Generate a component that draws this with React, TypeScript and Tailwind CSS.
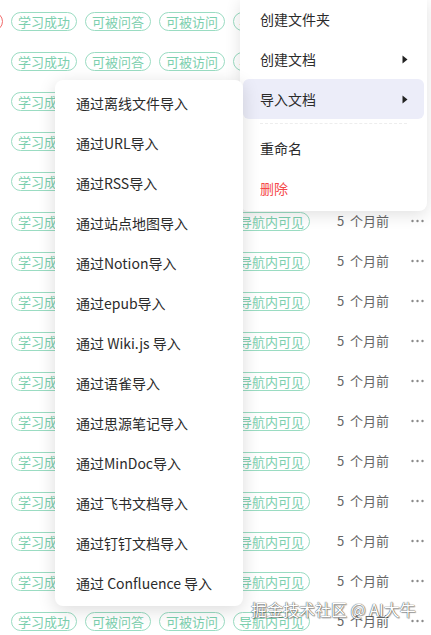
import React from "react";

const font = { fontFamily: '"Noto Sans CJK SC", "Noto Sans", sans-serif' };

function Tag({ children, w }: { children: React.ReactNode; w: string }) {
  return (
    <span
      className={`flex h-[19px] ${w} shrink-0 items-center justify-center whitespace-nowrap rounded-full border border-[#9adcc2] text-[13px] leading-none text-[#7ccfae]`}
    >
      {children}
    </span>
  );
}

function Dots() {
  return (
    <svg width="13" height="4" viewBox="0 0 13 4" className="shrink-0">
      <circle cx="1.5" cy="2" r="1.2" fill="#8a8a8a" />
      <circle cx="6.5" cy="2" r="1.2" fill="#8a8a8a" />
      <circle cx="11.5" cy="2" r="1.2" fill="#8a8a8a" />
    </svg>
  );
}

function Row({ first }: { first?: boolean }) {
  return (
    <div className="flex h-10 w-[431px] shrink-0 items-center whitespace-nowrap pl-[11px]">
      {first && (
        <span className="-ml-[63px] mr-[8px] h-[19px] w-[55px] shrink-0 rounded-full border border-[#f16b6b]" />
      )}
      <div className="flex shrink-0 gap-[8px]">
        <Tag w="w-[66px]">学习成功</Tag>
        <Tag w="w-[66px]">可被问答</Tag>
        <Tag w="w-[66px]">可被访问</Tag>
        <Tag w="w-[77px]">导航内可见</Tag>
      </div>
      <span className="ml-[27px] shrink-0 text-[13px] text-[#666]">5&nbsp;&nbsp;个月前</span>
      <span className="ml-[22px] flex shrink-0 items-center">
        <Dots />
      </span>
    </div>
  );
}

function Arrow() {
  return (
    <svg width="6" height="9" viewBox="0 0 6 9" className="shrink-0">
      <path d="M0.5 0.5 L5.5 4.5 L0.5 8.5 Z" fill="#222" />
    </svg>
  );
}

const subItems = [
  "通过离线文件导入",
  "通过URL导入",
  "通过RSS导入",
  "通过站点地图导入",
  "通过Notion导入",
  "通过epub导入",
  "通过 Wiki.js 导入",
  "通过语雀导入",
  "通过思源笔记导入",
  "通过MinDoc导入",
  "通过飞书文档导入",
  "通过钉钉文档导入",
  "通过 Confluence 导入",
];

export default function App() {
  return (
    <div className="relative h-[635px] w-[431px] overflow-hidden bg-white" style={font}>
      <div className="flex flex-col pt-[1px]">
        {Array.from({ length: 16 }).map((_, i) => (
          <Row key={i} first={i === 0} />
        ))}
      </div>

      {/* main context menu */}
      <div className="absolute left-[240px] top-[-1px] z-10 w-[187px] whitespace-nowrap rounded-b-lg bg-white px-[3px] pb-[3px] text-[14px] text-[#2b2b2b] shadow-[0_4px_16px_rgba(0,0,0,0.12)]">
        <div className="flex h-10 items-center pl-[17px]">创建文件夹</div>
        <div className="flex h-10 items-center justify-between pl-[17px] pr-[16px]">
          <span>创建文档</span>
          <Arrow />
        </div>
        <div className="flex h-10 items-center justify-between rounded-md bg-[#ecedf9] pl-[17px] pr-[16px]">
          <span>导入文档</span>
          <Arrow />
        </div>
        <div className="flex h-[9px] items-center px-[17px]">
          <div className="w-full border-t border-dashed border-[#ededed]" />
        </div>
        <div className="flex h-10 items-center pl-[17px]">重命名</div>
        <div className="flex h-10 items-center pl-[17px] text-[#f5484a]">删除</div>
      </div>

      {/* submenu */}
      <div className="absolute left-[55px] top-[80px] z-20 w-[188px] whitespace-nowrap rounded-lg bg-white py-[3px] text-[14px] text-[#2b2b2b] shadow-[0_4px_18px_rgba(0,0,0,0.14)]">
        {subItems.map((s) => (
          <div key={s} className="flex h-10 items-center pl-[21px]">
            {s}
          </div>
        ))}
      </div>

      {/* watermark */}
      <div
        className="absolute left-[251px] top-[601px] z-30 whitespace-nowrap text-[16px] leading-none text-white"
        style={{
          textShadow: "0 0 1px #555, 0 0 1px #555, 1px 1px 1px rgba(0,0,0,0.35)",
        }}
      >
        掘金技术社区 @ AI大牛
      </div>
    </div>
  );
}
